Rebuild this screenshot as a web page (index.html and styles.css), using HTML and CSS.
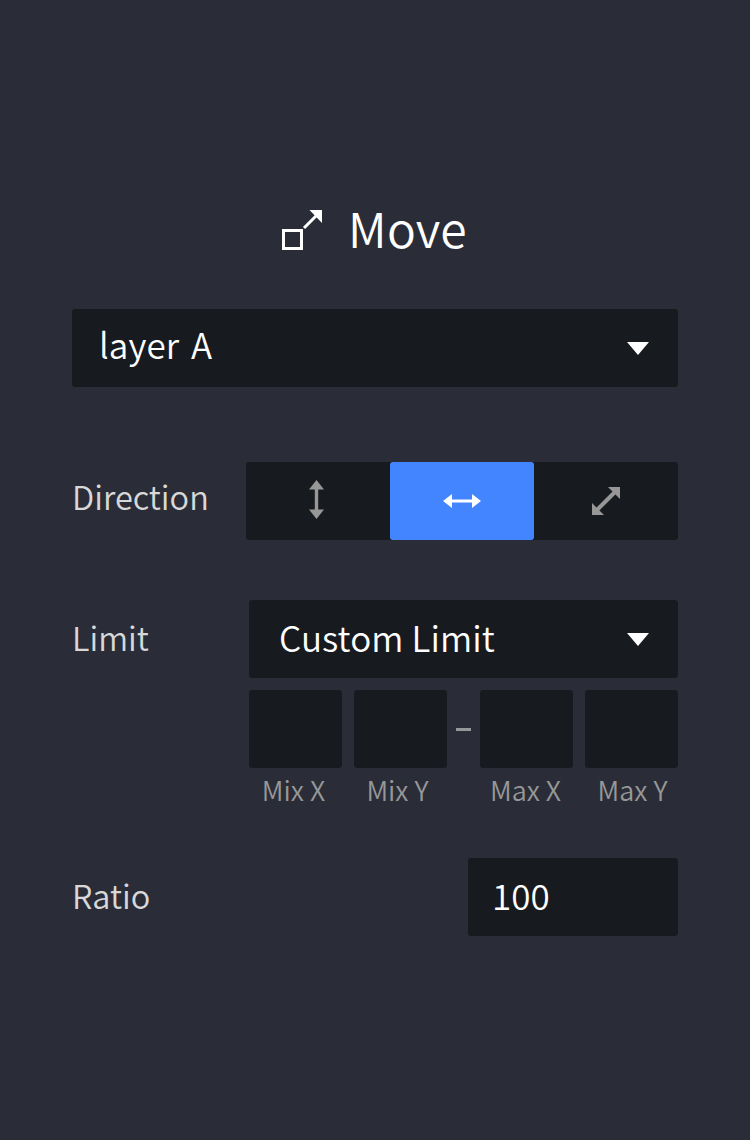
FILE: index.html
```html
<!DOCTYPE html>
<html lang="en">
<head>
    <meta charset="UTF-8">
    <meta name="viewport" content="width=device-width, initial-scale=1.0">
    <title>Move</title>
    <link rel="stylesheet" href="styles.css">
</head>
<body>
    <div class="panel">
        <h1 class="title">
            <svg class="title-icon" width="40" height="40" viewBox="0 0 40 40">
                <rect x="1.5" y="20.5" width="18" height="18" fill="none" stroke="#fff" stroke-width="3"/>
                <path d="M22 18L35 5" fill="none" stroke="#fff" stroke-width="3"/>
                <path d="M27.5 0H40V13Z" fill="#fff"/>
            </svg>
            <span class="title-text">Move</span>
        </h1>

        <div class="select layer-select">
            <span class="select-text">layer A</span>
            <i class="caret"></i>
        </div>

        <!-- Direction -->
        <div class="row direction-row">
            <div class="label">Direction</div>
            <div class="segments">
                <button class="segment">
                    <svg class="icon-vertical" width="15" height="39" viewBox="0 0 15 39">
                        <path d="M7.5 5V34" stroke="#979797" stroke-width="3.4"/>
                        <path d="M0 9.5L7.5 0L15 9.5ZM0 29.5L7.5 39L15 29.5Z" fill="#979797"/>
                    </svg>
                </button>
                <button class="segment active">
                    <svg width="38" height="14" viewBox="0 0 38 14">
                        <path d="M5 7H33" stroke="#fff" stroke-width="3"/>
                        <path d="M9 0L0 7L9 14ZM29 0L38 7L29 14Z" fill="#fff"/>
                    </svg>
                </button>
                <button class="segment">
                    <svg width="28" height="28" viewBox="0 0 28 28">
                        <path d="M4 24L24 4" stroke="#979797" stroke-width="4"/>
                        <path d="M16 0H28V12ZM0 16V28H12Z" fill="#979797"/>
                    </svg>
                </button>
            </div>
        </div>

        <!-- Limit -->
        <div class="row limit-row">
            <div class="label">Limit</div>
            <div class="limit-body">
                <div class="select limit-select">
                    <span class="select-text">Custom Limit</span>
                    <i class="caret"></i>
                </div>
                <div class="limit-grid">
                    <div class="limit-cell"><div class="box"></div><div class="hint">Mix X</div></div>
                    <div class="limit-cell"><div class="box"></div><div class="hint">Mix Y</div></div>
                    <div class="dash"></div>
                    <div class="limit-cell"><div class="box"></div><div class="hint">Max X</div></div>
                    <div class="limit-cell"><div class="box"></div><div class="hint">Max Y</div></div>
                </div>
            </div>
        </div>

        <!-- Ratio -->
        <div class="row ratio-row">
            <div class="label">Ratio</div>
            <div class="ratio-input">100</div>
        </div>
    </div>
</body>
</html>
```

FILE: styles.css
```css
* {
    box-sizing: border-box;
}
body {
    margin: 0;
    background: #2a2d38;
    font-family: "Noto Sans CJK KR", "Noto Sans", sans-serif;
    font-weight: 350;
    color: #fff;
}
.panel {
    width: 750px;
    height: 1140px;
    padding: 200px 72px 0;
}
.title {
    display: flex;
    align-items: center;
    justify-content: center;
    gap: 26px;
    height: 60px;
    margin: 0 0 49px;
    padding-right: 1px;
    font-size: 48px;
    font-weight: 350;
    line-height: 60px;
    letter-spacing: 0.2px;
}
.title-text {
    padding-bottom: 6px;
}
.select {
    display: flex;
    align-items: center;
    justify-content: space-between;
    height: 78px;
    background: #171a1f;
    border-radius: 3px;
    font-size: 35px;
    padding: 0 29px 0 27px;
}
.select-text {
    padding-bottom: 6px;
    letter-spacing: 0.1px;
}
.layer-select .select-text {
    padding-bottom: 10px;
    word-spacing: 4px;
}
.caret {
    width: 0;
    height: 0;
    border-left: 11px solid transparent;
    border-right: 11px solid transparent;
    border-top: 13px solid #fff;
}
.row {
    display: flex;
}
.label {
    font-size: 32.5px;
    color: #d8d8d8;
    line-height: 74px;
}
.direction-row {
    justify-content: space-between;
    margin-top: 75px;
}
.direction-row .label {
    line-height: 68px;
}
.segments {
    display: flex;
    width: 432px;
    height: 78px;
    background: #171a1f;
    border-radius: 3px;
}
.segment {
    flex: 1;
    display: flex;
    align-items: center;
    justify-content: center;
    padding: 0;
    border: none;
    border-radius: 3px;
    background: none;
}
.segment.active {
    background: #4285ff;
}
.icon-vertical {
    margin: -3px 4px 0 0;
}
.limit-row {
    justify-content: space-between;
    margin-top: 60px;
}
.limit-body {
    width: 429px;
}
.limit-select {
    padding-left: 30px;
}
.limit-grid {
    display: flex;
    margin-top: 12px;
}
.limit-cell {
    width: 93px;
    margin-right: 12px;
}
.limit-cell:last-child {
    margin-right: 0;
}
.box {
    height: 78px;
    background: #171a1f;
    border-radius: 3px;
}
.hint {
    margin-top: 4px;
    font-size: 27px;
    line-height: 36px;
    color: #979797;
    text-align: center;
    white-space: nowrap;
}
.limit-cell:nth-child(1) .hint {
    margin-left: -4px;
}
.limit-cell:nth-child(2) .hint {
    margin-left: -6px;
}
.limit-cell:nth-child(4) .hint {
    margin-left: -2px;
}
.limit-cell:nth-child(5) .hint {
    margin-right: -2px;
}
.dash {
    width: 15px;
    height: 3px;
    margin: 38px 9px 0 -3px;
    background: #979797;
}
.ratio-row {
    justify-content: space-between;
    margin-top: 50px;
}
.ratio-input {
    width: 210px;
    height: 78px;
    padding-left: 24px;
    background: #171a1f;
    border-radius: 3px;
    font-size: 35px;
    line-height: 74px;
}
```
